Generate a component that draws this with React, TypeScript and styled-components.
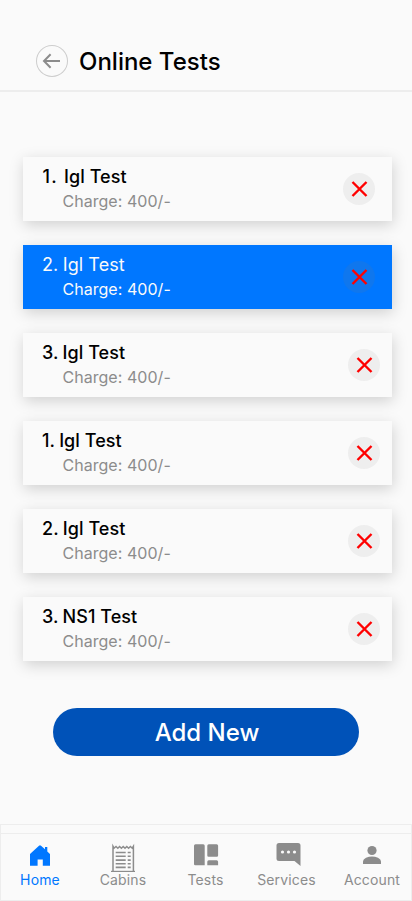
import React from "react";
import styled, { createGlobalStyle } from "styled-components";

const GlobalStyle = createGlobalStyle`
  * { box-sizing: border-box; }
  body { margin: 0; background: #fafafa; font-family: Inter, sans-serif; }
  button { font-family: inherit; border: 0; padding: 0; cursor: pointer; }
`;

const Screen = styled.div`
  display: flex;
  flex-direction: column;
  width: 412px;
  height: 901px;
  overflow: hidden;
  background: #fafafa;
`;

const Header = styled.header`
  display: flex;
  align-items: flex-end;
  gap: 11px;
  height: 92px;
  padding: 0 36px 13px;
  border-bottom: 2px solid #ededed;
`;

const BackButton = styled.button`
  display: flex;
  width: 32px;
  height: 32px;
  border-radius: 50%;
  background: none;
  box-shadow: inset 0 0 0 1px #cdcdcd;
`;

const Title = styled.h1`
  margin: 0;
  font-size: 24px;
  font-weight: 500;
  line-height: 30px;
  color: #000;
`;

const List = styled.ul`
  display: flex;
  flex-direction: column;
  gap: 24px;
  margin: 65px 20px 0 23px;
  padding: 0;
  list-style: none;
`;

const Card = styled.li<{ $selected?: boolean; $inset: number }>`
  display: flex;
  align-items: center;
  justify-content: space-between;
  height: 64px;
  padding: 0 ${(p) => p.$inset}px 0 19px;
  background: ${(p) => (p.$selected ? "#0077ff" : "#fafafa")};
  color: ${(p) => (p.$selected ? "#fafafa" : "#000")};
  font-weight: ${(p) => (p.$selected ? 400 : 500)};
  box-shadow: 1px 4px 14px rgba(0, 0, 0, 0.17);
`;

const CardText = styled.div`
  display: flex;
  flex-direction: column;
  gap: 3px;
  padding-bottom: 2px;
`;

const Name = styled.div`
  font-size: 18px;
  letter-spacing: 0.06px;
  line-height: 22px;
`;

const Ordinal = styled.span<{ $wide?: boolean }>`
  display: inline-block;
  margin-right: -0.6px;
  white-space: pre;
  ${(p) => p.$wide && "width: 22px; margin-right: 0; letter-spacing: 1.4px; padding-left: 0.5px;"}
`;

const Charge = styled.div<{ $selected?: boolean }>`
  padding-left: 20.4px;
  font-size: 16px;
  letter-spacing: 0.05px;
  font-weight: 400;
  line-height: 20px;
  color: ${(p) => (p.$selected ? "#fafafa" : "#8c8c8c")};
`;

const RemoveButton = styled.button<{ $selected?: boolean }>`
  display: flex;
  width: 32px;
  height: 32px;
  border-radius: 50%;
  background: ${(p) => (p.$selected ? "#0f77ee" : "#eeeeee")};
`;

const AddButton = styled.button`
  width: 306px;
  height: 48px;
  margin: 47px 0 0 53px;
  padding: 1px 0 0 2px;
  border-radius: 24px;
  background: #0052b8;
  color: #fff;
  font-size: 24px;
  font-weight: 500;
  line-height: 48px;
`;

const TabBar = styled.nav`
  height: 77px;
  margin-top: auto;
  padding-top: 8px;
  border: 1px solid #ededed;
`;

const Tabs = styled.div`
  display: grid;
  grid-template-columns: 78px 88px 77px 85px 86px;
  height: 67px;
  border-top: 1px solid #ededed;
`;

const Tab = styled.a<{ $active?: boolean }>`
  display: flex;
  flex-direction: column;
  align-items: center;
  padding-top: 6px;
  color: ${(p) => (p.$active ? "#0077ff" : "#8c8c8c")};
  font-size: 14px;
  font-weight: 400;
  line-height: 18px;
  letter-spacing: 0.15px;
  white-space: nowrap;

  svg { display: block; margin-bottom: -1px; }
`;

const ShiftedIcon = styled.span`
  display: block;
  margin-left: 5px;
`;

const tests = [
  { no: "1.", name: "Igl Test", wide: true, inset: 17 },
  { no: "2.", name: "Igl Test", selected: true, inset: 17 },
  { no: "3.", name: "Igl Test", inset: 12 },
  { no: "1.", name: "Igl Test", inset: 12 },
  { no: "2.", name: "Igl Test", inset: 12 },
  { no: "3.", name: "NS1 Test", inset: 12 },
];

const CrossIcon = () => (
  <svg width="32" height="32" viewBox="0 0 32 32">
    <path d="M9.5 9L23.5 23M23.5 9L9.5 23" stroke="#ff0000" strokeWidth="2.4" />
  </svg>
);

const BackIcon = () => (
  <svg width="32" height="32" viewBox="0 0 32 32" fill="none">
    <path d="M24 16H8.5M14.6 9.2L8 16L14.6 22.8" stroke="#8c8c8c" strokeWidth="2" />
  </svg>
);

const HomeIcon = () => (
  <svg width="32" height="32" viewBox="0 0 32 32" fill="currentColor">
    <path d="M6 14L15 5.8q1-.9 2 0L21 9.3V7h2.3V11.5L26 14V25.8h-7.2V19.5h-5.2v6.3H6z" />
  </svg>
);

const CabinsIcon = () => (
  <svg width="32" height="32" viewBox="0 0 32 32" fill="none" stroke="currentColor">
    <path d="M4 31.4H28" strokeWidth="1.2" />
    <path d="M6 32V6.3l1.1 1.9L9 6.5l1.8 1.7 1.8-1.7 1.8 1.7 1.8-1.7 1.8 1.7 1.8-1.7 1.8 1.7 1.8-1.7 1.8 1.7L26.4 6.3V32" strokeWidth="1.5" />
    <path d="M8.7 12.5h10M8.7 16.3h10M8.7 20.1h10M8.7 23.8h10M8.7 27.4h10M20.7 12.5h3M20.7 16.3h3M20.7 20.1h3M20.7 23.8h3M20.7 27.4h3" strokeWidth="1.6" />
  </svg>
);

const TestsIcon = () => (
  <svg width="32" height="32" viewBox="0 0 32 32" fill="currentColor">
    <path d="M4 5.7Q4 4.2 5.5 4.2h7.7q1.5 0 1.5 1.5V25.3H5.2Q4 25.3 4 24.1zM17.3 5.7Q17.3 4.2 18.8 4.2h7.8q1.5 0 1.5 1.5v9.9q0 1.2-1.2 1.2h-8.4q-1.2 0-1.2-1.2zM17.3 25.3v-3.5q0-1.5 1.5-1.5h7.8q1.5 0 1.5 1.5V25.3z" />
  </svg>
);

const ServicesIcon = () => (
  <svg width="32" height="32" viewBox="0 0 32 32">
    <path d="M6 3h19Q27.5 3 27.5 5.5V26l-6-5H6Q3.5 21 3.5 18.5v-13Q3.5 3 6 3z" fill="currentColor" />
    <circle cx="9.5" cy="12" r="1.6" fill="#fafafa" />
    <circle cx="15.5" cy="12" r="1.6" fill="#fafafa" />
    <circle cx="21.5" cy="12" r="1.6" fill="#fafafa" />
  </svg>
);

const AccountIcon = () => (
  <svg width="32" height="32" viewBox="0 0 32 32" fill="currentColor">
    <circle cx="16" cy="10.5" r="4.6" />
    <path d="M7 24.1V21.3Q7 19.3 10 17.8Q16 15.3 22 17.8Q25 19.3 25 21.3v2.8z" />
  </svg>
);

export default function App() {
  return (
    <Screen>
      <GlobalStyle />
      <Header>
        <BackButton aria-label="Back"><BackIcon /></BackButton>
        <Title>Online Tests</Title>
      </Header>
      <List>
        {tests.map((t, i) => (
          <Card key={i} $selected={t.selected} $inset={t.inset}>
            <CardText>
              <Name><Ordinal $wide={t.wide}>{t.no} </Ordinal>{t.name}</Name>
              <Charge $selected={t.selected}>Charge: 400/-</Charge>
            </CardText>
            <RemoveButton $selected={t.selected} aria-label="Remove"><CrossIcon /></RemoveButton>
          </Card>
        ))}
      </List>
      <AddButton>Add New</AddButton>
      <TabBar>
        <Tabs>
          <Tab $active><HomeIcon />Home</Tab>
          <Tab><CabinsIcon />Cabins</Tab>
          <Tab><TestsIcon />Tests</Tab>
          <Tab><ShiftedIcon><ServicesIcon /></ShiftedIcon>Services</Tab>
          <Tab><AccountIcon />Account</Tab>
        </Tabs>
      </TabBar>
    </Screen>
  );
}
